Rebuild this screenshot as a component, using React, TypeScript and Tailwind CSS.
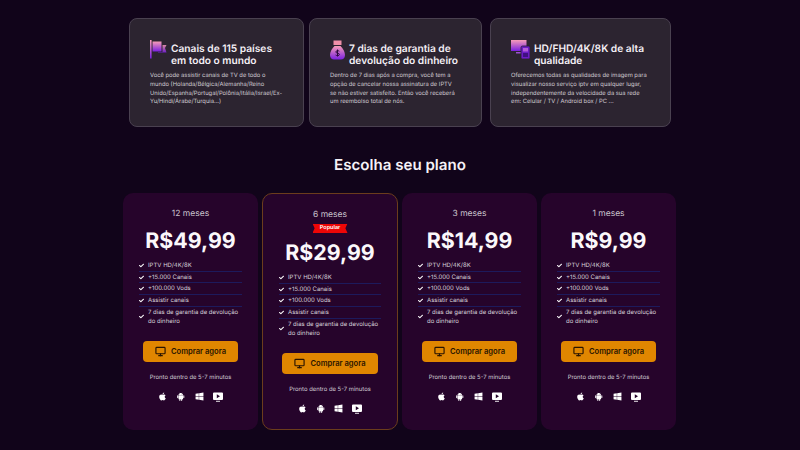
import { AiFillAndroid } from "react-icons/ai";
import { FaApple, FaCheck, FaWindows } from "react-icons/fa";
import { FiMonitor } from "react-icons/fi";

const plans = [
  { months: "12 meses", price: "R$49,99" },
  { months: "6 meses", price: "R$29,99", popular: true },
  { months: "3 meses", price: "R$14,99" },
  { months: "1 meses", price: "R$9,99" },
];

const perks = ["IPTV HD/4K/8K", "+15.000 Canais", "+100.000 Vods", "Assistir canais"];

function Gradient({ id }: { id: string }) {
  return (
    <defs>
      <linearGradient id={id} x1="0" y1="0" x2="0" y2="1">
        <stop offset="0" stopColor="#f79cb8" />
        <stop offset="1" stopColor="#7a1fe0" />
      </linearGradient>
    </defs>
  );
}

function FlagIcon() {
  return (
    <svg width="17" height="19" viewBox="0 0 17 19" className="shrink-0">
      <Gradient id="flag" />
      <rect x="0" y="0" width="1.6" height="18.5" fill="url(#flag)" />
      <path d="M2.5 1.5H11.5V11.5H2.5Z" fill="url(#flag)" />
      <path d="M12.5 5H16.5L15 8L16.5 12.5H8V12H12.5Z" fill="url(#flag)" opacity="0.85" />
    </svg>
  );
}

function MoneyIcon() {
  return (
    <svg width="15" height="20" viewBox="0 0 15 20" className="shrink-0">
      <Gradient id="bag" />
      <path d="M3.5 0.5H11.5V5H3.5Z" fill="#f08fa8" />
      <path d="M4.5 6H10.5C13 8.5 15 12 15 15C15 18 13 19.5 11 19.5H4C2 19.5 0 18 0 15C0 12 2 8.5 4.5 6Z" fill="url(#bag)" />
      <path d="M7.5 9.5V16.5M9.3 11.2C8.2 10.3 5.8 10.6 5.8 12C5.8 13.6 9.4 12.8 9.4 14.4C9.4 15.8 6.9 16 5.6 15" fill="none" stroke="#2c0a40" strokeWidth="1" />
    </svg>
  );
}

function ScreensIcon() {
  return (
    <svg width="19" height="19" viewBox="0 0 19 19" className="shrink-0">
      <Gradient id="screen" />
      <path d="M0 0H15.5V11H0Z" fill="url(#screen)" />
      <path d="M5 12H10V13.5H5Z" fill="#9a4fd0" />
      <rect x="10" y="6" width="9" height="13" rx="1.5" fill="#6c1cc4" stroke="#2c2230" strokeWidth="0.8" />
      <rect x="12" y="8" width="5" height="3.5" fill="#b45cd8" />
      <rect x="12" y="13" width="5" height="4" fill="#3f1080" />
    </svg>
  );
}

function ScreenPlayIcon() {
  return (
    <svg width="10" height="10" viewBox="0 0 10 10" className="shrink-0">
      <path fillRule="evenodd" d="M1 0.5H9A1 1 0 0 1 10 1.5V7A1 1 0 0 1 9 8H1A1 1 0 0 1 0 7V1.5A1 1 0 0 1 1 0.5ZM3.8 2.2V6.3L7 4.25Z" fill="#fff" />
      <path d="M3 8.8H7V9.7H3Z" fill="#fff" />
    </svg>
  );
}

function FeatureCard({ icon, title, text, className }: { icon: React.ReactNode; title: string[]; text: string[]; className: string }) {
  return (
    <div className={`flex h-[109px] flex-col rounded-[8px] border border-[#4a4150] bg-[#2c2430] px-[20px] pt-[24px] ${className}`}>
      <div className="flex items-start gap-[4px]">
        <div className="-mt-[3px] shrink-0">{icon}</div>
        <h3 className="text-[10.2px] leading-[12px] font-semibold whitespace-nowrap text-[#f4eff5]">
          {title.map((line) => (
            <div key={line}>{line}</div>
          ))}
        </h3>
      </div>
      <p className="mt-[5px] text-[5.8px] leading-[8.8px] text-[#d2ccd4]">
        {text.map((line) => (
          <span key={line} className="block whitespace-nowrap">{line}</span>
        ))}
      </p>
    </div>
  );
}

function PlanCard({ months, price, popular }: { months: string; price: string; popular?: boolean }) {
  return (
    <div className={`flex h-[237px] flex-col items-center rounded-[10px] bg-[#26042b] px-[16px] ${popular ? "w-[136px] border border-[#6b3d1c]" : "w-[135px]"}`}>
      <div className="mt-[16px] text-[8.5px] leading-[11px] text-[#c9c2cc]">{months}</div>
      {popular && (
        <div className="mt-[2.5px] flex h-[9.5px] w-[35px] items-center justify-center bg-[#ee0606] text-[5.5px] font-semibold text-white [clip-path:polygon(0_0,100%_0,94%_50%,100%_100%,0_100%,6%_50%)]">
          Popular
        </div>
      )}
      <div className={`${popular ? "mt-[7px]" : "mt-[8px]"} text-[21.4px] leading-[27px] font-bold text-[#fbf8fb]`}>{price}</div>
      <ul className="mt-[5px] w-full text-[6px] text-[#d8d2da]">
        {perks.map((perk) => (
          <li key={perk} className="flex h-[11.7px] items-center gap-[4px] border-b border-[#1d1a5c]">
            <FaCheck className="h-[5px] w-[5px] shrink-0 text-white" />
            {perk}
          </li>
        ))}
        <li className="mt-[1px] flex items-center gap-[4px] leading-[9px]">
          <FaCheck className="h-[5px] w-[5px] shrink-0 text-white" />
          <span>7 dias de garantia de devolução do dinheiro</span>
        </li>
      </ul>
      <button className="mt-[15px] flex h-[21px] w-[95.5px] shrink-0 items-center justify-center gap-[5px] rounded-[4px] bg-[#e08600] text-[7.6px] font-semibold text-[#2a1500]">
        <FiMonitor className="h-[11px] w-[11px] stroke-[2.5]" />
        Comprar agora
      </button>
      <div className="mt-[12px] text-[5.9px] leading-[8px] text-[#d2ccd4]">Pronto dentro de 5-7 minutos</div>
      <div className="mt-[10px] flex items-center gap-[9px] text-white">
        <FaApple className="h-[9px] w-[9px]" />
        <AiFillAndroid className="h-[9.5px] w-[9.5px]" />
        <FaWindows className="h-[9px] w-[9px]" />
        <ScreenPlayIcon />
      </div>
    </div>
  );
}

export default function App() {
  return (
    <div className="flex h-[450px] w-[800px] flex-col items-center overflow-hidden bg-[#11041a] font-['Inter',sans-serif] [text-rendering:geometricPrecision]">
      <section className="mt-[18px] flex w-[542px] justify-between">
        <FeatureCard
          className="w-[175px]"
          icon={<FlagIcon />}
          title={["Canais de 115 países", "em todo o mundo"]}
          text={["Você pode assistir canais de TV de todo o", "mundo (Holanda/Bélgica/Alemanha/Reino", "Unido/Espanha/Portugal/Polônia/Itália/Israel/Ex-", "Yu/Hindi/Árabe/Turquia...)"]}
        />
        <FeatureCard
          className="ml-[5px] w-[173px]"
          icon={<MoneyIcon />}
          title={["7 dias de garantia de", "devolução do dinheiro"]}
          text={["Dentro de 7 dias após a compra, você tem a", "opção de cancelar nossa assinatura de IPTV", "se não estiver satisfeito. Então você receberá", "um reembolso total de nós."]}
        />
        <FeatureCard
          className="ml-[8px] w-[181px]"
          icon={<ScreensIcon />}
          title={["HD/FHD/4K/8K de alta", "qualidade"]}
          text={["Oferecemos todas as qualidades de imagem para", "visualizar nosso serviço iptv em qualquer lugar,", "independentemente da velocidade da sua rede", "em: Celular / TV / Android box / PC ..."]}
        />
      </section>
      <h2 className="mt-[28px] text-[15.1px] leading-[20px] font-semibold text-[#f6f2f7]">Escolha seu plano</h2>
      <section className="mt-[18px] flex w-[554px] gap-[4px]">
        {plans.map((plan) => (
          <PlanCard key={plan.months} {...plan} />
        ))}
      </section>
    </div>
  );
}
